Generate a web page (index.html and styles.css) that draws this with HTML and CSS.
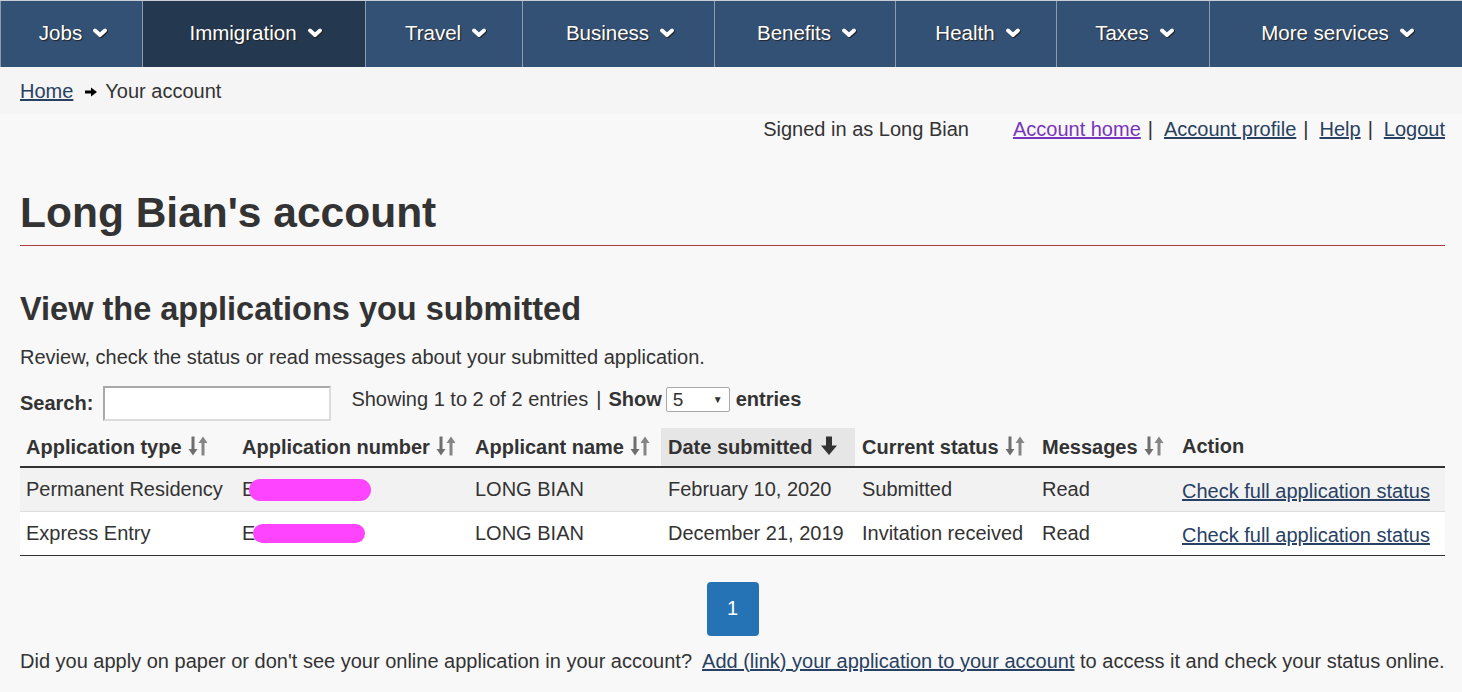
FILE: index.html
```html
<!DOCTYPE html>
<html lang="en">
<head>
<meta charset="utf-8">
<title>Long Bian's account</title>
<link rel="stylesheet" href="styles.css">
</head>
<body>
<nav class="menu">
  <a class="menu-item">Jobs <svg class="chev" viewBox="0 0 14 10"><path d="M2 2.5 L7 7 L12 2.5"/></svg></a>
  <a class="menu-item active">Immigration <svg class="chev" viewBox="0 0 14 10"><path d="M2 2.5 L7 7 L12 2.5"/></svg></a>
  <a class="menu-item">Travel <svg class="chev" viewBox="0 0 14 10"><path d="M2 2.5 L7 7 L12 2.5"/></svg></a>
  <a class="menu-item">Business <svg class="chev" viewBox="0 0 14 10"><path d="M2 2.5 L7 7 L12 2.5"/></svg></a>
  <a class="menu-item">Benefits <svg class="chev" viewBox="0 0 14 10"><path d="M2 2.5 L7 7 L12 2.5"/></svg></a>
  <a class="menu-item">Health <svg class="chev" viewBox="0 0 14 10"><path d="M2 2.5 L7 7 L12 2.5"/></svg></a>
  <a class="menu-item">Taxes <svg class="chev" viewBox="0 0 14 10"><path d="M2 2.5 L7 7 L12 2.5"/></svg></a>
  <a class="menu-item">More services <svg class="chev" viewBox="0 0 14 10"><path d="M2 2.5 L7 7 L12 2.5"/></svg></a>
</nav>
<div class="breadcrumb">
  <a class="link" href="#">Home</a>
  <svg class="crumb-arrow" viewBox="0 0 14 12"><path d="M1 4.5 H7 V1.5 L13 6 L7 10.5 V7.5 H1 Z"/></svg>
  <span>Your account</span>
</div>
<main class="page">
  <div class="account-bar">
    <span class="signed">Signed in as Long Bian</span>
    <a class="link visited" href="#">Account home</a><span class="sep">|</span>
    <a class="link" href="#">Account profile</a><span class="sep">|</span>
    <a class="link" href="#">Help</a><span class="sep">|</span>
    <a class="link" href="#">Logout</a>
  </div>
  <h1 class="title">Long Bian's account</h1>
  <h2 class="subtitle">View the applications you submitted</h2>
  <p class="lead">Review, check the status or read messages about your submitted application.</p>
  <div class="controls">
    <label class="search-label">Search: <span class="search-input"></span></label>
    <span class="info">Showing 1 to 2 of 2 entries</span>
    <span class="bar">|</span>
    <b>Show</b>
    <span class="select">5 <span class="caret">▼</span></span>
    <b>entries</b>
  </div>
  <table class="apps">
    <colgroup>
      <col class="c1"><col class="c2"><col class="c3"><col class="c4"><col class="c5"><col class="c6"><col class="c7">
    </colgroup>
    <thead>
      <tr>
        <th>Application type <svg class="sort" viewBox="0 0 20 22"><path class="dn" d="M3.5 1.5 H6.5 V14 H9.5 L5 20.5 L0.5 14 H3.5 Z"/><path class="up" d="M13.5 20.5 H16.5 V8 H19.5 L15 1.5 L10.5 8 H13.5 Z"/></svg></th>
        <th>Application number <svg class="sort" viewBox="0 0 20 22"><path class="dn" d="M3.5 1.5 H6.5 V14 H9.5 L5 20.5 L0.5 14 H3.5 Z"/><path class="up" d="M13.5 20.5 H16.5 V8 H19.5 L15 1.5 L10.5 8 H13.5 Z"/></svg></th>
        <th>Applicant name <svg class="sort" viewBox="0 0 20 22"><path class="dn" d="M3.5 1.5 H6.5 V14 H9.5 L5 20.5 L0.5 14 H3.5 Z"/><path class="up" d="M13.5 20.5 H16.5 V8 H19.5 L15 1.5 L10.5 8 H13.5 Z"/></svg></th>
        <th class="sorted">Date submitted <svg class="down" viewBox="0 0 18 22"><path d="M6 1.5 H12 V10.5 H17 L9 20 L1 10.5 H6 Z"/></svg></th>
        <th>Current status <svg class="sort" viewBox="0 0 20 22"><path class="dn" d="M3.5 1.5 H6.5 V14 H9.5 L5 20.5 L0.5 14 H3.5 Z"/><path class="up" d="M13.5 20.5 H16.5 V8 H19.5 L15 1.5 L10.5 8 H13.5 Z"/></svg></th>
        <th>Messages <svg class="sort" viewBox="0 0 20 22"><path class="dn" d="M3.5 1.5 H6.5 V14 H9.5 L5 20.5 L0.5 14 H3.5 Z"/><path class="up" d="M13.5 20.5 H16.5 V8 H19.5 L15 1.5 L10.5 8 H13.5 Z"/></svg></th>
        <th>Action</th>
      </tr>
    </thead>
    <tbody>
      <tr class="odd">
        <td>Permanent Residency</td>
        <td><span class="num">E<span class="redact r1"></span></span></td>
        <td>LONG BIAN</td>
        <td>February 10, 2020</td>
        <td>Submitted</td>
        <td>Read</td>
        <td><a class="link action" href="#">Check full application status</a></td>
      </tr>
      <tr>
        <td>Express Entry</td>
        <td><span class="num">E<span class="redact r2"></span></span></td>
        <td>LONG BIAN</td>
        <td>December 21, 2019</td>
        <td>Invitation received</td>
        <td>Read</td>
        <td><a class="link action" href="#">Check full application status</a></td>
      </tr>
    </tbody>
  </table>
  <div class="pager"><span class="page-btn">1</span></div>
  <p class="footnote">Did you apply on paper or don't see your online application in your account?&nbsp; <a class="link" href="#">Add (link) your application to your account</a> to access it and check your status online.</p>
</main>
</body>
</html>
```
FILE: styles.css
```css
* { box-sizing: border-box; }
html, body { margin: 0; padding: 0; }
body {
  background: #f8f8f8;
  color: #333;
  font-family: "Liberation Sans", Arial, sans-serif;
  font-size: 20px;
}
.menu {
  display: grid;
  grid-template-columns: 142px 223px 157px 192px 181px 161px 153px 1fr;
  height: 67px;
  background: #335075;
  border-top: 1px solid #c8ccd4;
}
.menu-item {
  display: flex;
  align-items: center;
  justify-content: center;
  gap: 11px;
  color: #fff;
  font-size: 20.5px;
  text-shadow: 1px 1px 1px #222;
  border-left: 1px solid #8e9bb0;
  padding: 0 0 2px 3px;
}
.menu-item.active { background: #243850; }
.chev {
  width: 14px;
  height: 10px;
  fill: none;
  stroke: #fff;
  stroke-width: 3.8;
  stroke-linecap: round;
  stroke-linejoin: round;
  filter: drop-shadow(1px 1px 0 #222);
}
.breadcrumb {
  height: 47px;
  background: #f5f5f5;
  display: flex;
  align-items: center;
  padding: 2px 20px 0;
  gap: 7px;
  font-size: 20px;
}
.crumb-arrow { width: 14px; height: 12px; fill: #000; margin-left: 4px; }
.link { color: #284162; text-decoration: underline; }
.link.visited { color: #7834bc; }
.page { padding: 0 17px 0 20px; }
.account-bar {
  display: flex;
  justify-content: flex-end;
  align-items: center;
  height: 30px;
  line-height: 30px;
}
.signed { margin-right: 44px; }
.sep { margin: 0 11px 0 7px; }
.title {
  font-size: 42.5px;
  line-height: 46px;
  font-weight: bold;
  margin: 46px 0 0;
  padding-bottom: 9px;
  border-bottom: 1px solid #af3c43;
}
.subtitle {
  font-size: 32.5px;
  line-height: 35px;
  margin: 46px 0 0;
}
.lead {
  margin: 16px 0 0;
  line-height: 28px;
}
.controls {
  display: flex;
  align-items: center;
  margin-top: 14px;
  height: 35px;
  gap: 6px;
}
.search-label { font-weight: bold; display: flex; align-items: center; gap: 10px; margin-top: 2px; }
.search-input {
  display: inline-block;
  width: 228px;
  height: 35px;
  background: #fff;
  border: 2px solid #a9a9a9;
  border-right-color: #dcdcdc;
  border-bottom-color: #dcdcdc;
}
.info { margin-left: 14px; margin-top: -6px; }
.bar { margin: -6px 1px 0 2px; }
.controls b { margin-top: -6px; }
.select {
  display: inline-flex;
  justify-content: space-between;
  align-items: center;
  width: 64px;
  height: 25px;
  margin: -6px 0 0 0;
  padding: 0 6px;
  background: #fff;
  border: 1px solid #a9a9a9;
  border-radius: 2px;
  font-size: 19px;
}
.controls .select { margin-left: -2px; }
.caret { font-size: 10px; }
.apps {
  width: 100%;
  border-collapse: collapse;
  margin-top: 8px;
  table-layout: fixed;
}
.c1 { width: 215px; } .c2 { width: 233px; } .c3 { width: 193px; } .c4 { width: 194px; }
.c5 { width: 180px; } .c6 { width: 140px; } .c7 { width: 270px; }
.apps th {
  text-align: left;
  font-weight: bold;
  height: 39px;
  padding: 0 0 1px 7px;
  border-bottom: 2px solid #333;
  white-space: nowrap;
}
.apps th:first-child { padding-left: 6px; }
.apps th.sorted { background: #e6e6e6; }
.sort { width: 20px; height: 22px; vertical-align: -3px; margin-left: 1px; }
.sort .dn { fill: #6e6e6e; }
.sort .up { fill: #858585; }
.down { width: 18px; height: 22px; fill: #333; vertical-align: -3px; margin-left: 2px; }
.apps td {
  height: 44px;
  padding: 1px 0 0 7px;
  border-bottom: 1px solid #ddd;
  white-space: nowrap;
}
.apps td:first-child { padding-left: 6px; }
.apps tbody tr:last-child td { border-bottom: 1px solid #333; }
.apps tr.odd td { background: #f2f2f2; }
.apps tbody tr:not(.odd) td { background: #fff; }
.action { display: inline-block; margin-top: 4px; }
.num { display: inline-flex; align-items: center; }
.redact {
  display: inline-block;
  background: #ff44ff;
  border-radius: 12px;
}
.r1 { width: 122px; height: 22px; margin-left: -6px; }
.r2 { width: 112px; height: 19px; margin-left: -2px; }
.pager { display: flex; justify-content: center; margin-top: 26px; }
.page-btn {
  display: flex;
  align-items: center;
  justify-content: center;
  width: 52px;
  height: 54px;
  background: #2572b4;
  color: #fff;
  border-radius: 4px;
}
.footnote { margin: 11px 0 0; line-height: 28px; }
```
